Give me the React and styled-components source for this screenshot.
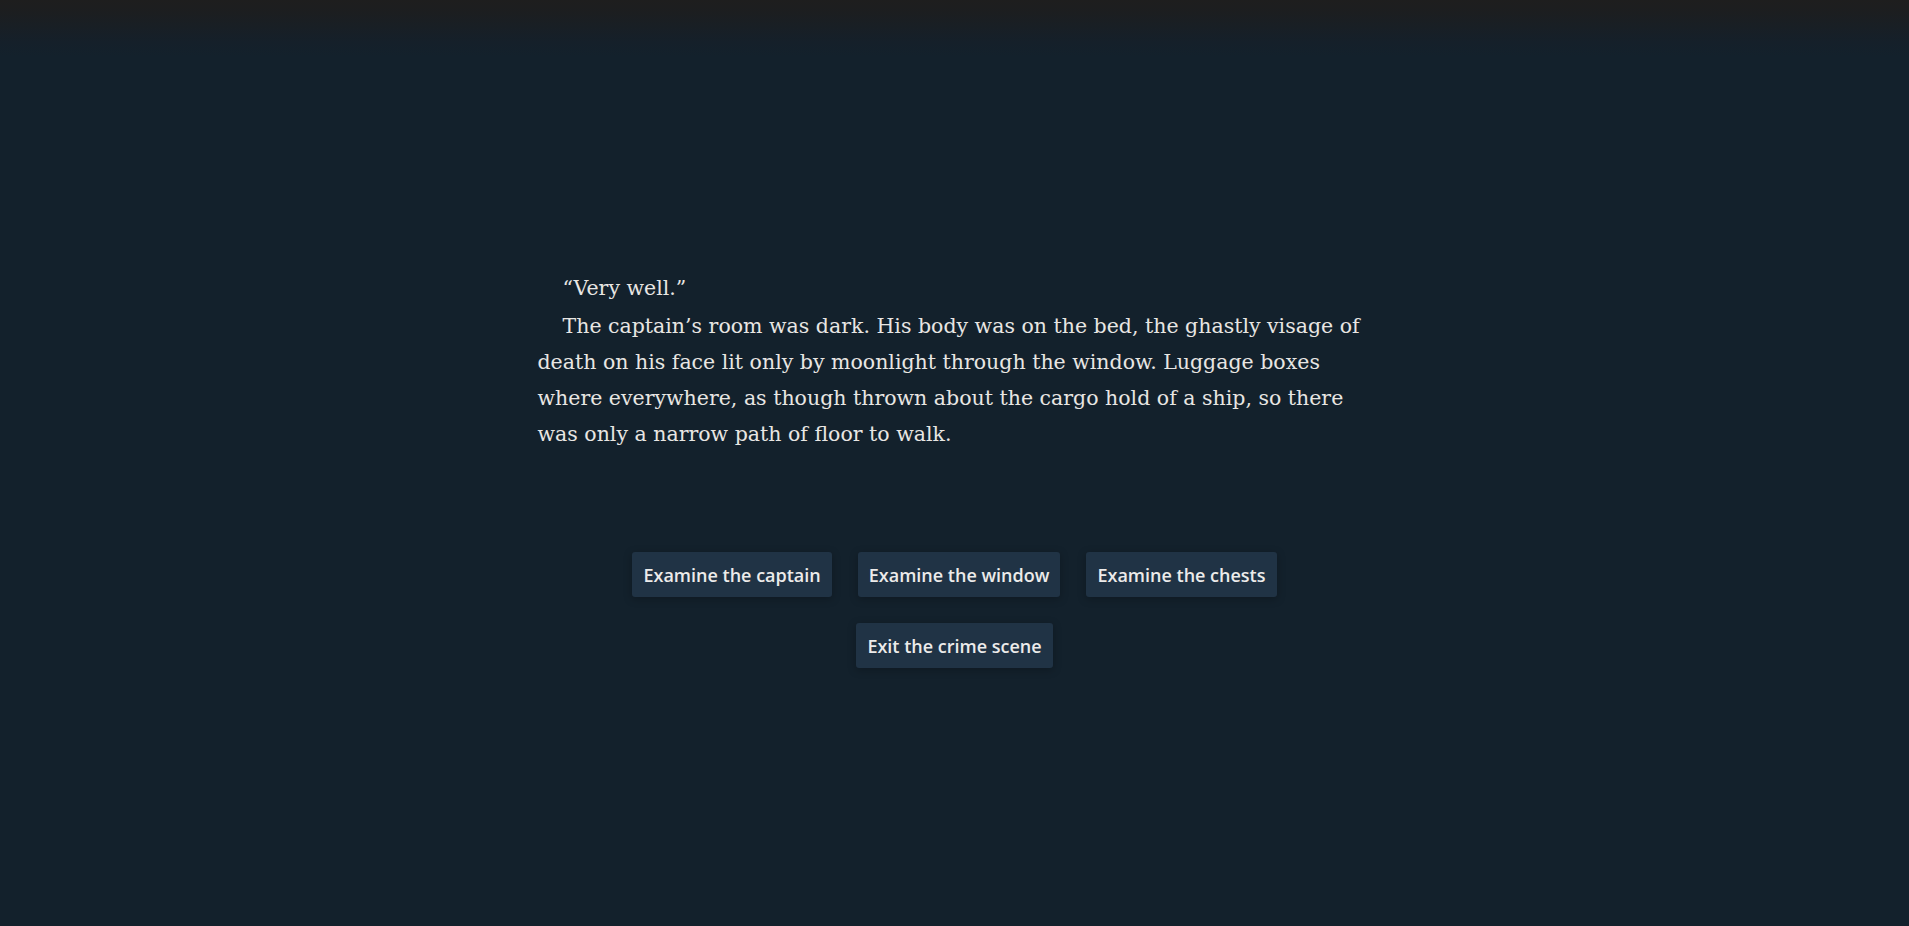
import React from "react";
import styled, { createGlobalStyle } from "styled-components";

const GlobalStyle = createGlobalStyle`
  html, body {
    margin: 0;
    padding: 0;
    height: 100%;
  }
  body {
    background: #13212c;
    color: #e6e6e6;
    font-family: "DejaVu Serif", serif;
  }
`;

const Page = styled.main`
  min-height: 926px;
  box-sizing: border-box;
  background: linear-gradient(to bottom, #1e1e1e 0px, #1c1e20 12px, #15202a 42px, #13212c 56px, #13212c 100%);
  display: flex;
  flex-direction: column;
  align-items: center;
  padding-top: 270px;
`;

const Story = styled.section`
  width: 834px;
  font-family: "DejaVu Serif", Georgia, serif;
  font-size: 20.5px;
  line-height: 36px;
  color: #e8e6e3;
`;

const Para = styled.p`
  margin: 0 0 2px 0;
  text-indent: 25px;
`;

const Choices = styled.nav`
  margin-top: 98px;
  display: flex;
  flex-wrap: wrap;
  justify-content: center;
  column-gap: 26px;
  row-gap: 26px;
  width: 720px;
`;

const Choice = styled.button`
  height: 45px;
  padding: 0 11px;
  border: none;
  border-radius: 3px;
  background: #203345;
  color: #ecebea;
  font-family: "Open Sans", "Noto Sans", sans-serif;
  font-size: 18px;
  font-weight: 600;
  box-shadow: 0 2px 8px rgba(0, 0, 0, 0.25);
  cursor: pointer;
`;

export default function App() {
  return (
    <>
      <GlobalStyle />
      <Page>
        <Story>
          <Para>“Very well.”</Para>
          <Para>
            The captain’s room was dark. His body was on the bed, the ghastly visage of death on his face lit only by
            moonlight through the window. Luggage boxes where everywhere, as though thrown about the cargo hold of a
            ship, so there was only a narrow path of floor to walk.
          </Para>
        </Story>
        <Choices>
          <Choice>Examine the captain</Choice>
          <Choice>Examine the window</Choice>
          <Choice>Examine the chests</Choice>
          <Choice>Exit the crime scene</Choice>
        </Choices>
      </Page>
    </>
  );
}
